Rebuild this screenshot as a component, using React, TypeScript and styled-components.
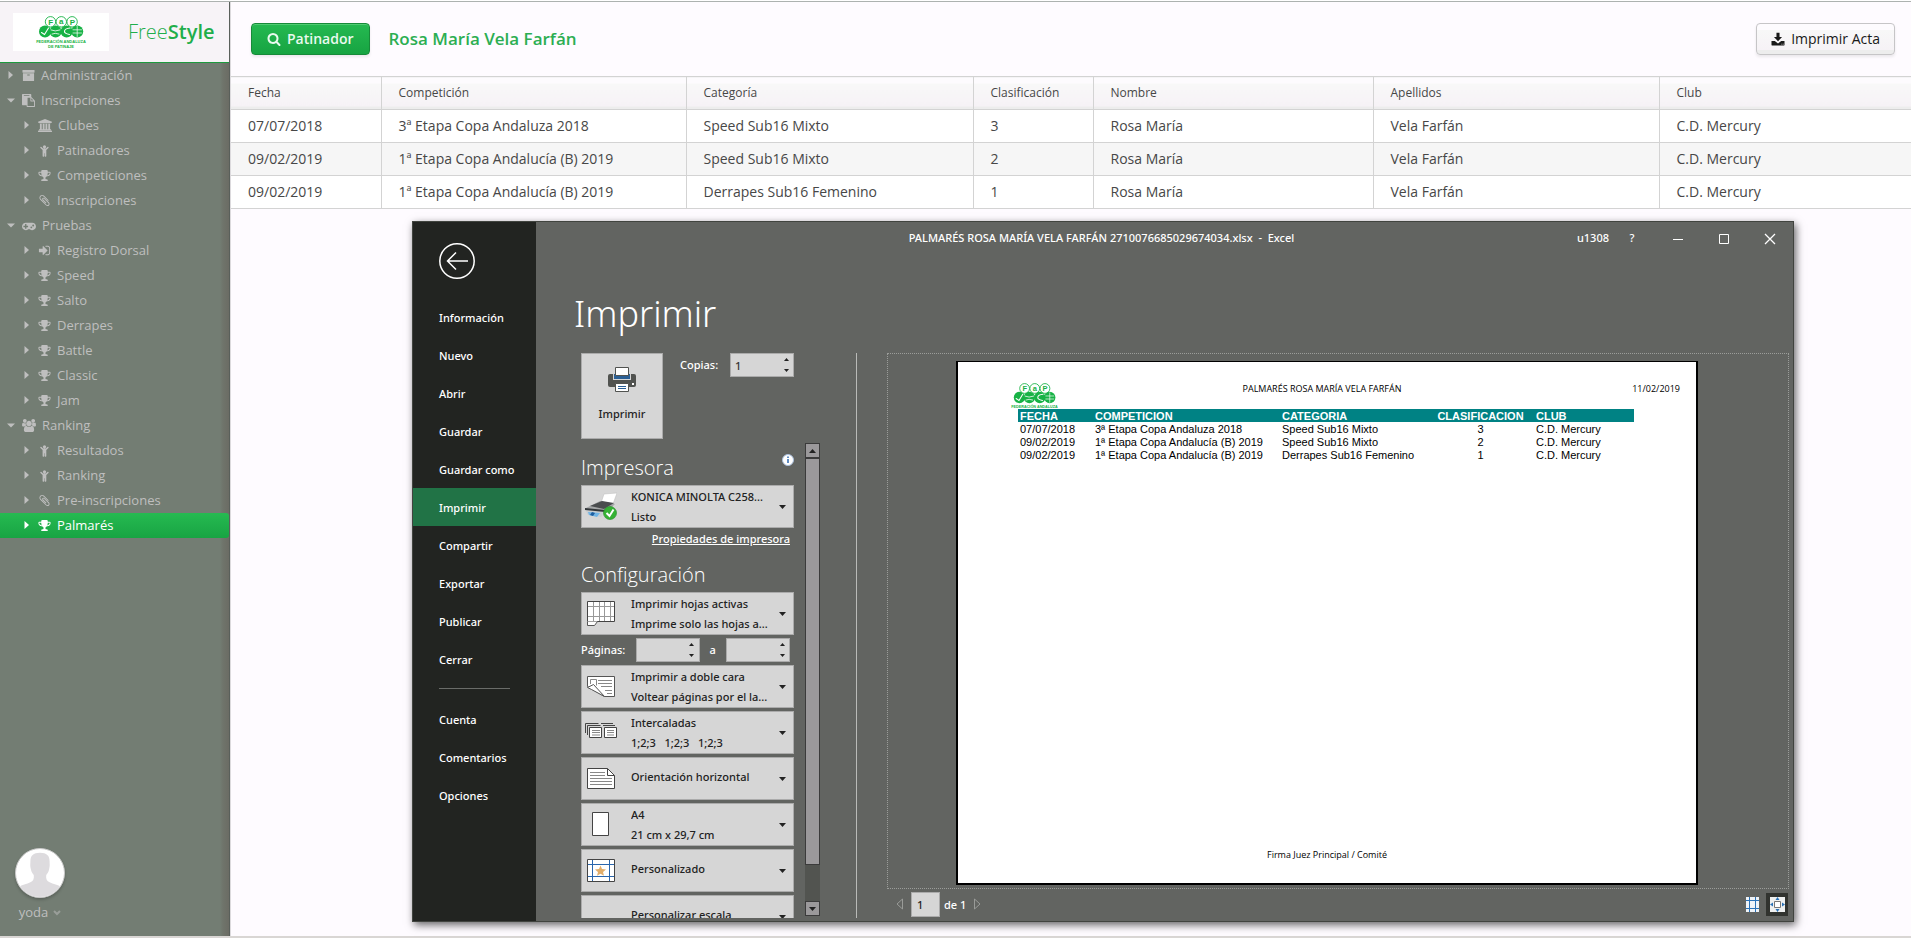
import React from 'react';
import styled, { createGlobalStyle, css } from 'styled-components';

const uiFont = '"Open Sans", "Noto Sans", sans-serif';
const officeFont = '"Noto Sans", "Open Sans", sans-serif';

const Global = createGlobalStyle`
  *, *::before, *::after { box-sizing: border-box; }
  body { margin: 0; background: #fefbff; font-family: ${uiFont}; font-size: 14px; color: #474747; }
  button, input, select { font: inherit; color: inherit; margin: 0; }
  a { color: inherit; text-decoration: none; }
`;

/* ---------- glyph icons ---------- */

type Glyph = { width: number; d: string };

const glyphs: Record<string, Glyph> = {
  archive: { width: 1792, d: 'M1088 832q0-26-19-45t-45-19h-256q-26 0-45 19t-19 45 19 45 45 19h256q26 0 45-19t19-45zm576-192v960q0 26-19 45t-45 19h-1408q-26 0-45-19t-19-45v-960q0-26 19-45t45-19h1408q26 0 45 19t19 45zm64-448v256q0 26-19 45t-45 19h-1536q-26 0-45-19t-19-45v-256q0-26 19-45t45-19h1536q26 0 45 19t19 45z' },
  paste: { width: 1792, d: 'M768 1664h896v-640h-416q-40 0-68-28t-28-68v-416h-384v1152zm256-1440v-64q0-13-9.5-22.5t-22.5-9.5h-704q-13 0-22.5 9.5t-9.5 22.5v64q0 13 9.5 22.5t22.5 9.5h704q13 0 22.5-9.5t9.5-22.5zm256 672h299l-299-299v299zm512 128v672q0 40-28 68t-68 28h-960q-40 0-68-28t-28-68v-160h-544q-40 0-68-28t-28-68v-1344q0-40 28-68t68-28h1088q40 0 68 28t28 68v328q21 13 36 28l408 408q28 28 48 76t20 88z' },
  university: { width: 1920, d: 'M960 0l960 384v128h-128q0 26-20.5 45t-48.5 19h-1526q-28 0-48.5-19t-20.5-45h-128v-128zm-704 640h256v768h128v-768h256v768h128v-768h256v768h128v-768h256v768h59q28 0 48.5 19t20.5 45v64h-1664v-64q0-26 20.5-45t48.5-19h59v-768zm1595 960q28 0 48.5 19t20.5 45v128h-1920v-128q0-26 20.5-45t48.5-19h1782z' },
  child: { width: 1792, d: 'M1436 540l-292 292v824q0 46-33 79t-79 33-79-33-33-79v-384h-64v384q0 46-33 79t-79 33-79-33-33-79v-824l-292-292q-28-28-28-68t28-68q29-28 68.5-28t67.5 28l228 228h368l228-228q28-28 68-28t68 28q28 29 28 68.5t-28 67.5zm-316-156q0 93-65.5 158.5t-158.5 65.5-158.5-65.5-65.5-158.5 65.5-158.5 158.5-65.5 158.5 65.5 65.5 158.5z' },
  trophy: { width: 1792, d: 'M522 883q-74-162-74-371h-256v96q0 78 94.5 162t235.5 113zm1078-275v-96h-256q0 209-74 371 141-29 235.5-113t94.5-162zm128-128v128q0 71-41.5 143t-112 130-173 97.5-215.5 44.5q-42 54-95 95-38 34-52.5 72.5t-14.5 89.5q0 54 30.5 91t97.5 37q75 0 133.5 45.5t58.5 114.5v64q0 14-9 23t-23 9h-832q-14 0-23-9t-9-23v-64q0-69 58.5-114.5t133.5-45.5q67 0 97.5-37t30.5-91q0-51-14.5-89.5t-52.5-72.5q-53-41-95-95-113-5-215.5-44.5t-173-97.5-112-130-41.5-143v-128q0-40 28-68t68-28h288v-96q0-66 47-113t113-47h576q66 0 113 47t47 113v96h288q40 0 68 28t28 68z' },
  clip: { width: 1792, d: 'M1596 1385q0 117-79 196t-196 79q-135 0-235-100l-777-776q-113-115-113-271 0-159 110-270t269-111q158 0 273 113l605 606q10 10 10 22 0 16-30.5 46.5t-46.5 30.5q-13 0-23-10l-606-607q-79-77-181-77-106 0-179 75t-73 181q0 105 76 181l776 777q63 63 145 63 64 0 106-42t42-106q0-82-63-145l-581-581q-26-24-60-24-29 0-48 19t-19 48q0 32 25 59l410 410q10 10 10 22 0 16-31 47t-47 31q-12 0-22-10l-410-410q-63-61-63-149 0-82 57-139t139-57q88 0 149 63l581 581q100 98 100 235z' },
  gamepad: { width: 1920, d: 'M832 1088v-128q0-14-9-23t-23-9h-192v-192q0-14-9-23t-23-9h-128q-14 0-23 9t-9 23v192h-192q-14 0-23 9t-9 23v128q0 14 9 23t23 9h192v192q0 14 9 23t23 9h128q14 0 23-9t9-23v-192h192q14 0 23-9t9-23zm576 64q0-53-37.5-90.5t-90.5-37.5-90.5 37.5-37.5 90.5 37.5 90.5 90.5 37.5 90.5-37.5 37.5-90.5zm256-256q0-53-37.5-90.5t-90.5-37.5-90.5 37.5-37.5 90.5 37.5 90.5 90.5 37.5 90.5-37.5 37.5-90.5zm256 128q0 212-150 362t-362 150q-192 0-338-128h-220q-146 128-338 128-212 0-362-150t-150-362 150-362 362-150h896q212 0 362 150t150 362z' },
  signin: { width: 1792, d: 'M1312 896q0 26-19 45l-544 544q-19 19-45 19t-45-19-19-45v-288h-448q-26 0-45-19t-19-45v-384q0-26 19-45t45-19h448v-288q0-26 19-45t45-19 45 19l544 544q19 19 19 45zm352-352v704q0 119-84.5 203.5t-203.5 84.5h-320q-13 0-22.5-9.5t-9.5-22.5q0-4-1-20t-.5-26.5 3-23.5 10-19.5 20.5-6.5h320q66 0 113-47t47-113v-704q0-66-47-113t-113-47h-312l-11.5-1-11.5-3-8-5.5-7-9-2-13.5q0-4-1-20t-.5-26.5 3-23.5 10-19.5 20.5-6.5h320q119 0 203.5 84.5t84.5 203.5z' },
  users: { width: 1920, d: 'M593 896q-162 5-265 128h-134q-82 0-138-40.5t-56-118.5q0-353 124-353 6 0 43.5 21t97.5 42.5 119 21.5q67 0 133-23-5 37-5 66 0 159 81 288zm1071 637q0 120-73 189.5t-194 69.5h-874q-121 0-194-69.5t-73-189.5q0-53 3.5-103.5t14-109 26.5-108.5 43-97.5 62-81 85.5-53.5 111.5-20q10 0 43 21.5t73 48 107 48 135 21.5 135-21.5 107-48 73-48 43-21.5q61 0 111.5 20t85.5 53.5 62 81 43 97.5 26.5 108.5 14 109 3.5 103.5zm-1024-1277q0 106-75 181t-181 75-181-75-75-181 75-181 181-75 181 75 75 181zm704 384q0 159-112.5 271.5t-271.5 112.5-271.5-112.5-112.5-271.5 112.5-271.5 271.5-112.5 271.5 112.5 112.5 271.5zm576 225q0 78-56 118.5t-138 40.5h-134q-103-123-265-128 81-129 81-288 0-29-5-66 66 23 133 23 59 0 119-21.5t97.5-42.5 43.5-21q124 0 124 353zm-128-609q0 106-75 181t-181 75-181-75-75-181 75-181 181-75 181 75 75 181z' },
  search: { width: 1792, d: 'M1216 832q0-185-131.5-316.5t-316.5-131.5-316.5 131.5-131.5 316.5 131.5 316.5 316.5 131.5 316.5-131.5 131.5-316.5zm512 832q0 52-38 90t-90 38q-54 0-90-38l-343-342q-179 124-399 124-143 0-273.5-55.5t-225-150-150-225-55.5-273.5 55.5-273.5 150-225 225-150 273.5-55.5 273.5 55.5 225 150 150 225 55.5 273.5q0 220-124 399l343 343q37 37 37 90z' },
  download: { width: 1792, d: 'M700 100h392v540h320L896 1180 380 640h320zM64 1150h420l412 330 412-330h420v520q0 60-60 60H124q-60 0-60-60zM1340 1500v100h100v-100zM1520 1500v100h100v-100z' },
};

const GlyphSvg = styled.svg<{ $size: number; $wide: boolean }>`
  flex: none;
  height: ${p => p.$size}px;
  width: ${p => p.$size + (p.$wide ? 1 : 0)}px;
  fill: currentColor;
`;

function Icon({ name, size = 13 }: { name: string; size?: number }) {
  const g = glyphs[name];
  return (
    <GlyphSvg $size={size} $wide={g.width > 1792} viewBox={`0 0 ${g.width} 1792`} fillRule="evenodd" aria-hidden>
      <path d={g.d} />
    </GlyphSvg>
  );
}

/* ---------- federation logo ---------- */

const LogoSvg = styled.svg<{ $w: number }>`
  display: block;
  width: ${p => p.$w}px;
  height: auto;
  overflow: visible;
`;

function FapLogo({ width, compact }: { width: number; compact?: boolean }) {
  const green = '#17b245';
  return (
    <LogoSvg $w={width} viewBox="0 0 52 32" role="img" aria-label="Federación Andaluza de Patinaje">
      <g fill="#fff" stroke={green} strokeWidth="0.9">
        <circle cx="15.5" cy="5.8" r="5.2" />
        <circle cx="26.3" cy="5.8" r="5.2" />
        <circle cx="37.1" cy="5.8" r="5.2" />
      </g>
      <g fill={green} fontFamily="Liberation Sans, sans-serif" fontWeight="700" fontSize="8" textAnchor="middle">
        <text x="15.7" y="8.6">F</text>
        <text x="26.3" y="8.3">a</text>
        <text x="37.3" y="8.6">P</text>
      </g>
      <g fill={green}>
        <circle cx="10" cy="15.4" r="6" />
        <circle cx="20.6" cy="15.4" r="6" />
        <circle cx="31.6" cy="15.4" r="6" />
        <circle cx="42.2" cy="15.4" r="6" />
      </g>
      <g fill="none" stroke="#fff" strokeWidth="1.1" strokeLinecap="round">
        <path d="M6.500 16.500l3 2 4-6.500" />
        <path d="M16 14q4 2 9 0M17 18q3-1.500 7 0" strokeWidth="0.8" />
        <path d="M35 12q-5 .5-5.500 3t5 3.500" />
        <path d="M38 13.800h8.500M38 17h8.500M42.200 10.500v10" strokeWidth="0.7" />
      </g>
      <g fill={green} fontFamily="Liberation Sans, sans-serif" fontWeight="700" fontSize="4" textAnchor="middle">
        <text x="26" y="27">FEDERACIÓN ANDALUZA</text>
        {!compact && <text x="26" y="31.500">DE PATINAJE</text>}
      </g>
    </LogoSvg>
  );
}

/* ---------- application shell ---------- */

const Shell = styled.div`
  height: 100vh;
  display: flex;
  flex-direction: column;
  border-bottom: 2px solid #d9d6d4;
`;
const TopRule = styled.div`
  flex: none;
  height: 2px;
  background: #fff;
  border-bottom: 1px solid #adb2b0;
`;
const Columns = styled.div`
  flex: 1;
  min-height: 0;
  display: flex;
`;

const Sidebar = styled.aside`
  flex: none;
  width: 230px;
  display: flex;
  flex-direction: column;
  color: #bfbfbf;
  font-size: 13px;
  background: linear-gradient(to left, #6b6c64 0, #6f746b 6px, #737d73 9px);
  border-right: 1px solid #595f5a;
`;
const Brand = styled.div`
  flex: none;
  height: 61px;
  display: flex;
  align-items: center;
  gap: 19px;
  padding: 0 13px 0;
  background: #f7f3f7;
  border-bottom: 1px solid #1d9a3e;
`;
const LogoPlate = styled.div`
  flex: none;
  width: 96px;
  height: 38px;
  display: flex;
  justify-content: center;
  align-items: center;
  background: #fff;
`;
const BrandName = styled.h1`
  margin: 0;
  font-size: 20px;
  line-height: 28px;
  font-weight: 300;
  color: #1fae4b;
  strong { font-weight: 600; }
`;
const Tree = styled.nav`
  flex: 1;
  min-height: 0;
`;
const TreeLink = styled.a<{ $child?: boolean; $active?: boolean }>`
  display: flex;
  align-items: center;
  gap: 6px;
  height: 25px;
  padding-bottom: 1px;
  padding-left: ${p => (p.$child ? 22 : 6)}px;
  ${p => p.$active && css`
    color: #fff;
    background: linear-gradient(#26ba51, #18a443);
    border-radius: 0 3px 3px 0;
  `}
`;
const Arrow = styled.svg`
  flex: none;
  width: 10px;
  height: 10px;
  fill: currentColor;
`;
const UserMenu = styled.button`
  flex: none;
  align-self: flex-start;
  display: flex;
  flex-direction: column;
  align-items: center;
  gap: 5px;
  margin: 0 0 14px 15px;
  padding: 0;
  border: 0;
  background: none;
  line-height: 19px;
`;
const Avatar = styled.svg`
  width: 50px;
  height: 50px;
  border-radius: 50%;
  background: #fff;
  border: 1px solid #c9c9c9;
  box-shadow: 0 2px 3px rgba(0, 0, 0, 0.2);
`;
const UserName = styled.span`
  display: flex;
  align-items: center;
  gap: 5px;
  svg { width: 8px; height: 6px; fill: none; stroke: #999e99; stroke-width: 2; }
`;

const Main = styled.main`
  flex: 1;
  min-width: 0;
  display: flex;
  flex-direction: column;
  border-left: 1px solid #dcdadd;
`;
const Toolbar = styled.header`
  flex: none;
  height: 74px;
  display: flex;
  align-items: center;
  gap: 19px;
  padding: 0 16px 0 20px;
`;
const ToolButton = styled.button<{ $primary?: boolean }>`
  height: 32px;
  display: flex;
  align-items: center;
  gap: 6px;
  padding: 0 15px 1px;
  border-radius: 4px;
  font-size: 14px;
  ${p => p.$primary
    ? css`
        font-weight: 600;
        color: #eafaef;
        background: linear-gradient(#25b951, #17a442);
        border: 1px solid #178a39;
        box-shadow: inset 0 1px 0 #4fcb72, 0 2px 3px rgba(0, 0, 0, 0.08);
      `
    : css`
        margin-left: auto;
        padding: 0 14px 1px;
        color: #191919;
        background: linear-gradient(#fdfbfe 0 20%, #f8f8f8 20%, #f6f2f6 88%, #ededed 88%);
        border: 1px solid #c6c5c7;
        box-shadow: 0 2px 3px rgba(0, 0, 0, 0.08);
      `}
`;
const SkaterName = styled.h2`
  margin: 0;
  padding-bottom: 1px;
  font-size: 17px;
  font-weight: 600;
  color: #2cae52;
`;

const Results = styled.table`
  width: 100%;
  table-layout: fixed;
  border-collapse: collapse;
  background: #fff;
  th, td {
    height: 33px;
    padding: 0 17px 1px;
    text-align: left;
    white-space: nowrap;
    border: 1px solid #d3d3d3;
    border-width: 1px 0 1px 1px;
  }
  th:first-child, td:first-child { border-left: 0; }
  th {
    font-size: 12px;
    font-weight: 400;
    background: linear-gradient(#fdfbfe 0 20%, #f8f8f8 20%, #f6f2f6 90%, #ededed 90%);
  }
  tbody tr:nth-child(even) { background: #f6f6f6; }
`;
const Col = styled.col<{ $w?: number }>`
  ${p => p.$w && css`width: ${p.$w}px;`}
`;

/* ---------- office window ---------- */

const OfficeWindow = styled.section`
  flex: 1;
  min-height: 0;
  display: flex;
  margin: 12px 117px 14px 181px;
  border: 1px solid #41443f;
  background: #626461;
  box-shadow: 2px 3px 8px rgba(0, 0, 0, 0.6);
  font-family: ${officeFont};
  font-size: 11px;
  font-weight: 500;
  color: #fff;
`;
const Backstage = styled.nav`
  flex: none;
  width: 123px;
  padding-top: 21px;
  background: #222421;
`;
const BackButton = styled.button`
  display: block;
  margin: 0 0 19px 26px;
  padding: 0;
  border: 0;
  background: none;
  svg { display: block; width: 36px; height: 36px; fill: none; stroke: #fff; stroke-width: 1.500; }
`;
const BackstageLink = styled.a<{ $active?: boolean }>`
  display: flex;
  align-items: center;
  height: 38px;
  padding-left: 26px;
  background: ${p => (p.$active ? '#217346' : 'none')};
`;
const Rule = styled.hr`
  margin: 10px 26px 11px;
  border: 0;
  border-top: 1px solid #6a6c69;
`;
const Body = styled.div`
  flex: 1;
  min-width: 0;
  display: flex;
  flex-direction: column;
`;
const TitleBar = styled.header`
  flex: none;
  height: 30px;
  display: flex;
  align-items: center;
`;
const WindowTitle = styled.span`
  flex: 1;
  padding-left: 90px;
  text-align: center;
  white-space: pre;
`;
const Account = styled.span`
  padding-right: 12px;
`;
const WindowButton = styled.button<{ $narrow?: boolean }>`
  width: ${p => (p.$narrow ? 22 : 46)}px;
  margin-right: ${p => (p.$narrow ? 12 : 0)}px;
  height: 30px;
  padding: 0;
  border: 0;
  background: none;
  text-align: center;
  svg { width: 12px; height: 12px; fill: none; stroke: #fff; vertical-align: middle; }
`;
const PageTitle = styled.h2`
  flex: none;
  margin: 38px 0 15px 38px;
  font-size: 36px;
  line-height: 48px;
  font-weight: 300;
`;
const Content = styled.div`
  flex: 1;
  min-height: 0;
  display: flex;
  gap: 30px;
  padding: 0 4px 3px 45px;
`;
const Options = styled.div`
  flex: none;
  width: 276px;
  display: flex;
  flex-direction: column;
  border-right: 1px solid #b9bab8;
`;
const PrintRow = styled.div`
  flex: none;
  width: 213px;
  display: flex;
  align-items: flex-start;
  margin-bottom: 4px;
`;
const PrintButton = styled.button`
  width: 82px;
  height: 86px;
  display: flex;
  flex-direction: column;
  align-items: center;
  gap: 14px;
  padding: 13px 0 0;
  border: 1px solid #ababab;
  background: #d6d6d6;
  color: #222;
  svg { width: 28px; height: 25px; }
`;
const FieldLabel = styled.label<{ $gap?: number }>`
  line-height: 24px;
  padding-left: ${p => p.$gap ?? 0}px;
`;
const SpinBox = styled.div`
  width: 64px;
  height: 24px;
  margin-left: auto;
  display: flex;
  border: 1px solid #ababab;
  background: #d6d6d6;
  color: #333;
  input { flex: 1; min-width: 0; padding: 0 4px; border: 0; background: none; outline: 0; }
`;
const SpinButtons = styled.div`
  width: 14px;
  display: flex;
  flex-direction: column;
  button { flex: 1; display: flex; align-items: center; justify-content: center; padding: 0; border: 0; background: none; }
  svg { width: 5px; height: 3px; fill: #222; }
`;
const ScrollArea = styled.div`
  flex: 1;
  min-height: 0;
  display: flex;
  gap: 11px;
`;
const Settings = styled.div`
  width: 213px;
  display: flex;
  flex-direction: column;
  gap: 3px;
  overflow: hidden;
  > * { flex: none; }
`;
const SectionHead = styled.div`
  display: flex;
  justify-content: space-between;
  align-items: flex-start;
  padding: 11px 0 0;
  h3 { margin: 0; font: 300 20px/28px ${uiFont}; }
  svg { width: 12px; height: 12px; }
`;
const Picker = styled.div`
  height: 43px;
  display: flex;
  align-items: center;
  padding: 0 7px 0 3px;
  border: 1px solid #ababab;
  background: #d6d6d6;
  color: #222;
`;
const PickerIcon = styled.svg`
  flex: none;
  width: 32px;
  height: 28px;
  margin-bottom: 2px;
`;
const PickerText = styled.div<{ $single?: boolean }>`
  flex: 1;
  min-width: 0;
  margin-left: 14px;
  padding-bottom: ${p => (p.$single ? 3 : 0)}px;
  line-height: 20px;
  span { display: block; white-space: pre; }
`;
const PickerSelect = styled.select`
  display: block;
  width: 100%;
  height: 20px;
  padding: 0;
  appearance: none;
  border: 0;
  outline: 0;
  background: none;
  line-height: 20px;
`;
const Caret = styled.svg`
  flex: none;
  width: 7px;
  height: 4px;
  fill: #222;
`;
const PropertiesLink = styled.a`
  align-self: flex-end;
  margin-right: 4px;
  line-height: 16px;
  text-decoration: underline;
`;
const PagesRow = styled.div`
  display: flex;
  padding-right: 4px;
`;
const ScrollBar = styled.div`
  width: 15px;
  display: flex;
  flex-direction: column;
  margin-bottom: 2px;
  background: #525450;
`;
const ScrollButton = styled.button`
  height: 15px;
  display: flex;
  align-items: center;
  justify-content: center;
  padding: 0;
  border: 1px solid #3b3b3b;
  background: #9b999b;
`;
const Thumb = styled.div`
  flex: 407;
  border: 1px solid #3b3b3b;
  background: #9b999b;
`;
const Track = styled.div`
  flex: 36;
`;

const Preview = styled.div`
  flex: 1;
  min-width: 0;
  display: flex;
  flex-direction: column;
`;
const PreviewFrame = styled.div`
  flex: 1;
  min-height: 0;
  display: flex;
  padding: 7px 90px 3px 68px;
  border: 1px dotted #9b9d9a;
`;
const Sheet = styled.article`
  flex: 1;
  display: flex;
  flex-direction: column;
  border: 1px solid #000;
  border-width: 1px 2px 2px;
  background: #fff;
  color: #000;
  font: 400 9px/12px ${uiFont};
`;
const SheetHeader = styled.div`
  flex: none;
  height: 47px;
  display: grid;
  grid-template-columns: 1fr auto 1fr;
  align-items: start;
  padding: 21px 16px 0 52px;
  span { white-space: nowrap; }
  span + span { text-align: right; }
`;
const SheetTitle = styled.span`
  margin-left: -46px;
`;
const SheetTable = styled.table`
  width: calc(100% - 122px);
  margin-left: 60px;
  table-layout: fixed;
  border-collapse: collapse;
  font: 400 11px/12px "Liberation Sans", sans-serif;
  th { height: 13px; background: #008284; color: #fff; font-weight: 700; }
  th, td { padding: 0 2px; text-align: left; white-space: nowrap; }
  td { padding-top: 1px; }
  th:nth-child(4), td:nth-child(4) { text-align: center; }
`;
const Signature = styled.p`
  margin: auto 0 22px;
  text-align: center;
`;
const PreviewBar = styled.div`
  flex: none;
  height: 29px;
  display: flex;
  align-items: center;
  gap: 4px;
  padding: 1px 1px 0 6px;
`;
const StepButton = styled.button`
  width: 14px;
  padding: 0;
  border: 0;
  background: none;
  line-height: 0;
  svg { width: 8px; height: 12px; fill: none; stroke: #999b98; }
`;
const PageInput = styled.input`
  width: 29px;
  height: 25px;
  padding: 0 5px;
  border: 1px solid #ababab;
  background: #d6d6d6;
  color: #222;
`;
const ViewButtons = styled.div`
  display: flex;
  margin-left: auto;
`;
const ViewButton = styled.button<{ $on?: boolean }>`
  width: 22px;
  height: 23px;
  margin-left: 3px;
  padding: 0;
  border: 0;
  background: ${p => (p.$on ? '#31332f' : 'none')};
  line-height: 0;
  svg { width: 15px; height: 15px; }
`;

/* ---------- data ---------- */

type Leaf = [icon: string, label: string];
const menu: { icon: string; label: string; items: Leaf[] }[] = [
  { icon: 'archive', label: 'Administración', items: [] },
  { icon: 'paste', label: 'Inscripciones', items: [['university', 'Clubes'], ['child', 'Patinadores'], ['trophy', 'Competiciones'], ['clip', 'Inscripciones']] },
  { icon: 'gamepad', label: 'Pruebas', items: [['signin', 'Registro Dorsal'], ['trophy', 'Speed'], ['trophy', 'Salto'], ['trophy', 'Derrapes'], ['trophy', 'Battle'], ['trophy', 'Classic'], ['trophy', 'Jam']] },
  { icon: 'users', label: 'Ranking', items: [['child', 'Resultados'], ['child', 'Ranking'], ['clip', 'Pre-inscripciones'], ['trophy', 'Palmarés']] },
];
const results = [
  ['07/07/2018', '3ª Etapa Copa Andaluza 2018', 'Speed Sub16 Mixto', '3'],
  ['09/02/2019', '1ª Etapa Copa Andalucía (B) 2019', 'Speed Sub16 Mixto', '2'],
  ['09/02/2019', '1ª Etapa Copa Andalucía (B) 2019', 'Derrapes Sub16 Femenino', '1'],
];
const headings = ['Fecha', 'Competición', 'Categoría', 'Clasificación', 'Nombre', 'Apellidos', 'Club'];
const backstage = ['Información', 'Nuevo', 'Abrir', 'Guardar', 'Guardar como', 'Imprimir', 'Compartir', 'Exportar', 'Publicar', 'Cerrar'];

/* ---------- pieces ---------- */

function TreeArrow({ open }: { open?: boolean }) {
  return (
    <Arrow viewBox="0 0 10 10" aria-hidden>
      <path d={open ? 'M1 3.500h8L5 7.500z' : 'M2.500 1v8l4.500-4z'} />
    </Arrow>
  );
}

function Spin({ id, value = '' }: { id: string; value?: string }) {
  return (
    <SpinBox>
      <input id={id} type="text" defaultValue={value} />
      <SpinButtons>
        <button aria-label="Aumentar"><svg viewBox="0 0 5 3"><path d="M0 3h5L2.500 0z" /></svg></button>
        <button aria-label="Disminuir"><svg viewBox="0 0 5 3"><path d="M0 0h5L2.500 3z" /></svg></button>
      </SpinButtons>
    </SpinBox>
  );
}

function Option({ name, label, detail, children }: { name: string; label: string; detail?: string; children?: React.ReactNode }) {
  return (
    <Picker>
      <PickerIcon viewBox="0 0 32 28" aria-hidden>{children}</PickerIcon>
      <PickerText $single={!detail}>
        <PickerSelect aria-label={name}><option>{label}</option></PickerSelect>
        {detail && <span>{detail}</span>}
      </PickerText>
      <Caret viewBox="0 0 7 4" aria-hidden><path d="M0 0h7L3.500 4z" /></Caret>
    </Picker>
  );
}

function PrinterIcon() {
  return (
    <svg viewBox="0 0 28 25" aria-hidden>
      <rect x="0" y="7" width="28" height="13" rx="2" fill="#515350" />
      <path d="M5 7h18v6H5z" fill="#d6d6d6" />
      <path d="M6 7h16v5H6z" fill="#2a5f95" />
      <path d="M7.500.5h13v8h-13z" fill="#fff" stroke="#515350" />
      <path d="M7.500 16.500h13v8h-13z" fill="#fff" stroke="#515350" />
      <path d="M10 19.500h8M10 21.500h8" stroke="#2a5f95" />
      <path d="M24 16h2v2h-2z" fill="#fff" />
    </svg>
  );
}

function OfficePrint() {
  return (
    <OfficeWindow>
      <Backstage>
        <BackButton aria-label="Atrás">
          <svg viewBox="0 0 36 36"><circle cx="18" cy="18" r="17.200" /><path d="M29 18H9M17 9.500L8.500 18l8.500 8.500" /></svg>
        </BackButton>
        {backstage.map(t => <BackstageLink key={t} href="#" $active={t === 'Imprimir'}>{t}</BackstageLink>)}
        <Rule />
        {['Cuenta', 'Comentarios', 'Opciones'].map(t => <BackstageLink key={t} href="#">{t}</BackstageLink>)}
      </Backstage>
      <Body>
        <TitleBar>
          <WindowTitle>{'PALMARÉS ROSA MARÍA VELA FARFÁN 2710076685029674034.xlsx  -  Excel'}</WindowTitle>
          <Account>u1308</Account>
          <WindowButton $narrow>?</WindowButton>
          <WindowButton aria-label="Minimizar"><svg viewBox="0 0 12 12"><path d="M1 6.500h10" /></svg></WindowButton>
          <WindowButton aria-label="Maximizar"><svg viewBox="0 0 12 12"><path d="M1.500 1.500h9v9h-9z" /></svg></WindowButton>
          <WindowButton aria-label="Cerrar"><svg viewBox="0 0 12 12"><path d="M1 1l10 10M11 1L1 11" strokeWidth="1.300" /></svg></WindowButton>
        </TitleBar>
        <PageTitle>Imprimir</PageTitle>
        <Content>
          <Options>
            <PrintRow>
              <PrintButton><PrinterIcon />Imprimir</PrintButton>
              <FieldLabel $gap={17} htmlFor="copies">Copias:</FieldLabel>
              <Spin id="copies" value="1" />
            </PrintRow>
            <ScrollArea>
              <Settings>
                <SectionHead>
                  <h3>Impresora</h3>
                  <svg viewBox="0 0 12 12" aria-hidden>
                    <circle cx="6" cy="6" r="5.500" fill="#fff" stroke="#a9bfdc" />
                    <path d="M6 5v4M6 2.500v1.500" stroke="#2a66ad" strokeWidth="1.500" />
                  </svg>
                </SectionHead>
                <Option name="Impresora" label="KONICA MINOLTA C258..." detail="Listo">
                  <path d="M19 2l13-1-4 11-12-1z" fill="#fff" stroke="#bbb" strokeWidth=".5" />
                  <path d="M1 16L15 9l15 3-9 9-18-1z" fill="#a5a7a8" />
                  <path d="M5 14l12-5 12 2-10 6z" fill="#4a4c4e" />
                  <path d="M0 17l20 2-4 6-13-2z" fill="#c9cdd0" />
                  <path d="M0 16l20 2v2L0 18z" fill="#33373a" />
                  <path d="M3 20l12 1-3 4-8-2z" fill="#6fb4e6" />
                  <path d="M7 20l3 1-2 3-3-1z" fill="#1f5fa0" />
                  <circle cx="25" cy="21" r="6.500" fill="#35b234" stroke="#1e8c22" strokeWidth=".6" />
                  <path d="M21.500 21l3 3 4-6.500" fill="none" stroke="#fff" strokeWidth="2" />
                </Option>
                <PropertiesLink href="#">Propiedades de impresora</PropertiesLink>
                <SectionHead><h3>Configuración</h3></SectionHead>
                <Option name="Qué imprimir" label="Imprimir hojas activas" detail="Imprime solo las hojas a...">
                  <path d="M2.500 2.500h27v20h-27z" fill="#fff" stroke="#444" />
                  <path d="M8.500 3v19M14.500 3v19M19.500 3v19M25.500 3v19M3 7.500h26M3 17.500h26" stroke="#999" />
                  <path d="M2.500 22.500v4h7l3-4" fill="#fff" stroke="#555" />
                </Option>
                <PagesRow>
                  <FieldLabel htmlFor="from">Páginas:</FieldLabel>
                  <Spin id="from" />
                  <FieldLabel $gap={10} htmlFor="to">a</FieldLabel>
                  <Spin id="to" />
                </PagesRow>
                <Option name="Caras" label="Imprimir a doble cara" detail="Voltear páginas por el la...">
                  <path d="M2.500 4.500h27v20h-10l-17-10z" fill="#fff" stroke="#555" />
                  <path d="M13 8.500h14M13 11.500h14M16 14.500h11M20 18.500h7M22 21.500h5" stroke="#888" />
                  <path d="M5.500 12V7.500h6v6" fill="none" stroke="#888" />
                  <path d="M2.500 15.500l6-3 11 12-13-7z" fill="#fff" stroke="#555" />
                </Option>
                <Option name="Intercalado" label="Intercaladas" detail="1;2;3   1;2;3   1;2;3">
                  <path d="M.5 15V5.500h13M2.500 17V7.500h13M16 5.500h12M18 7.500h12" fill="none" stroke="#444" />
                  <path d="M4.500 9.500h12v10h-12zM19.500 9.500h12v10h-12z" fill="#fff" stroke="#444" />
                  <path d="M7 12.500h8M7 14.500h8M7 17h8M22 12.500h7M22 14.500h7M22 17h7" stroke="#888" />
                </Option>
                <Option name="Orientación" label="Orientación horizontal">
                  <path d="M2.500 4.500h20l7 7v13h-27z" fill="#fff" stroke="#444" />
                  <path d="M22.500 4.500v7h7" fill="none" stroke="#444" />
                  <path d="M5 8.500h15M5 11.500h15M5 14.500h22M5 17.500h22M5 20.500h22" stroke="#888" />
                </Option>
                <Option name="Papel" label="A4" detail="21 cm x 29,7 cm">
                  <path d="M7.500 2.500h16v23h-16z" fill="#fff" stroke="#444" />
                </Option>
                <Option name="Márgenes" label="Personalizado">
                  <path d="M2.500 3.500h27v22h-27z" fill="#fff" stroke="#444" />
                  <path d="M7.500 4v21M24.500 4v21M3 8.500h26M3 20.500h26" stroke="#2a66ad" />
                  <path d="M15.500 9.500l1.500 3.600 4 .3-3 2.500 1 3.800-3.500-2-3.500 2 1-3.800-3-2.500 4-.3z" fill="#e3ae6a" />
                </Option>
                <Option name="Escala" label="Personalizar escala" />
              </Settings>
              <ScrollBar>
                <ScrollButton aria-label="Subir"><Caret viewBox="0 0 7 4"><path d="M0 4h7L3.500 0z" /></Caret></ScrollButton>
                <Thumb />
                <Track />
                <ScrollButton aria-label="Bajar"><Caret viewBox="0 0 7 4"><path d="M0 0h7L3.500 4z" /></Caret></ScrollButton>
              </ScrollBar>
            </ScrollArea>
          </Options>
          <Preview>
            <PreviewFrame>
              <Sheet>
                <SheetHeader>
                  <FapLogo width={49} compact />
                  <SheetTitle>PALMARÉS ROSA MARÍA VELA FARFÁN</SheetTitle>
                  <span>11/02/2019</span>
                </SheetHeader>
                <SheetTable>
                  <colgroup><Col $w={75} /><Col $w={187} /><Col $w={147} /><Col $w={107} /><Col /></colgroup>
                  <thead><tr>{['FECHA', 'COMPETICION', 'CATEGORIA', 'CLASIFICACION', 'CLUB'].map(h => <th key={h}>{h}</th>)}</tr></thead>
                  <tbody>
                    {results.map((r, i) => <tr key={i}>{[...r, 'C.D. Mercury'].map((c, j) => <td key={j}>{c}</td>)}</tr>)}
                  </tbody>
                </SheetTable>
                <Signature>Firma Juez Principal / Comité</Signature>
              </Sheet>
            </PreviewFrame>
            <PreviewBar>
              <StepButton aria-label="Página anterior"><svg viewBox="0 0 8 12"><path d="M6.500 1v10L1 6z" /></svg></StepButton>
              <PageInput aria-label="Página" type="text" defaultValue="1" />
              <span>de 1</span>
              <StepButton aria-label="Página siguiente"><svg viewBox="0 0 8 12"><path d="M1.500 1v10L7 6z" /></svg></StepButton>
              <ViewButtons>
                <ViewButton aria-label="Mostrar márgenes">
                  <svg viewBox="0 0 15 15"><path d="M1 0h13v15H1z" fill="#eef3f8" /><path d="M4.500 0v15M10.500 0v15M1 3.500h13M1 11.500h13" stroke="#2a72b8" /></svg>
                </ViewButton>
                <ViewButton $on aria-label="Zoom a página">
                  <svg viewBox="0 0 15 15"><path d="M0 0h15v15H0z" fill="#eef0f0" /><path d="M4.500 4.500h6v6h-6z" fill="#fff" stroke="#777" /><path d="M7.500 0l2 3h-4zM7.500 15l2-3h-4zM0 7.500l3-2v4zM15 7.500l-3-2v4z" fill="#2a72b8" /></svg>
                </ViewButton>
              </ViewButtons>
            </PreviewBar>
          </Preview>
        </Content>
      </Body>
    </OfficeWindow>
  );
}

export default function App() {
  return (
    <>
      <Global />
      <Shell>
        <TopRule />
        <Columns>
          <Sidebar>
            <Brand>
              <LogoPlate><FapLogo width={52} /></LogoPlate>
              <BrandName>Free<strong>Style</strong></BrandName>
            </Brand>
            <Tree>
              {menu.map(group => (
                <React.Fragment key={group.label + group.icon}>
                  <TreeLink href="#"><TreeArrow open={group.items.length > 0} /><Icon name={group.icon} />{group.label}</TreeLink>
                  {group.items.map(([icon, label]) => (
                    <TreeLink key={label} href="#" $child $active={label === 'Palmarés'}>
                      <TreeArrow /><Icon name={icon} />{label}
                    </TreeLink>
                  ))}
                </React.Fragment>
              ))}
            </Tree>
            <UserMenu>
              <Avatar viewBox="0 0 50 50" aria-hidden>
                <path d="M25 4c-7 0-10 3-10 9 0 3-.5 4 .5 8 .5 3 2 5 3 6 .5 4-.5 6-3 7.500C11 37 6 37 3 40v10h44V40c-3-3-8-3-12.500-5.500-2.500-1.500-3.500-3.500-3-7.500 1-1 2.500-3 3-6 1-4 .5-5 .5-8 0-6-3-9-10-9z" fill="#dddbde" />
              </Avatar>
              <UserName>yoda <svg viewBox="0 0 8 6" aria-hidden><path d="M1 1l3 3 3-3" /></svg></UserName>
            </UserMenu>
          </Sidebar>
          <Main>
            <Toolbar>
              <ToolButton $primary><Icon name="search" size={14} />Patinador</ToolButton>
              <SkaterName>Rosa María Vela Farfán</SkaterName>
              <ToolButton><Icon name="download" size={14} />Imprimir Acta</ToolButton>
            </Toolbar>
            <Results>
              <colgroup><Col $w={150} /><Col $w={305} /><Col $w={287} /><Col $w={120} /><Col $w={280} /><Col $w={286} /><Col /></colgroup>
              <thead><tr>{headings.map(h => <th key={h}>{h}</th>)}</tr></thead>
              <tbody>
                {results.map((r, i) => (
                  <tr key={i}>{[...r, 'Rosa María', 'Vela Farfán', 'C.D. Mercury'].map((c, j) => <td key={j}>{c}</td>)}</tr>
                ))}
              </tbody>
            </Results>
            <OfficePrint />
          </Main>
        </Columns>
      </Shell>
    </>
  );
}
